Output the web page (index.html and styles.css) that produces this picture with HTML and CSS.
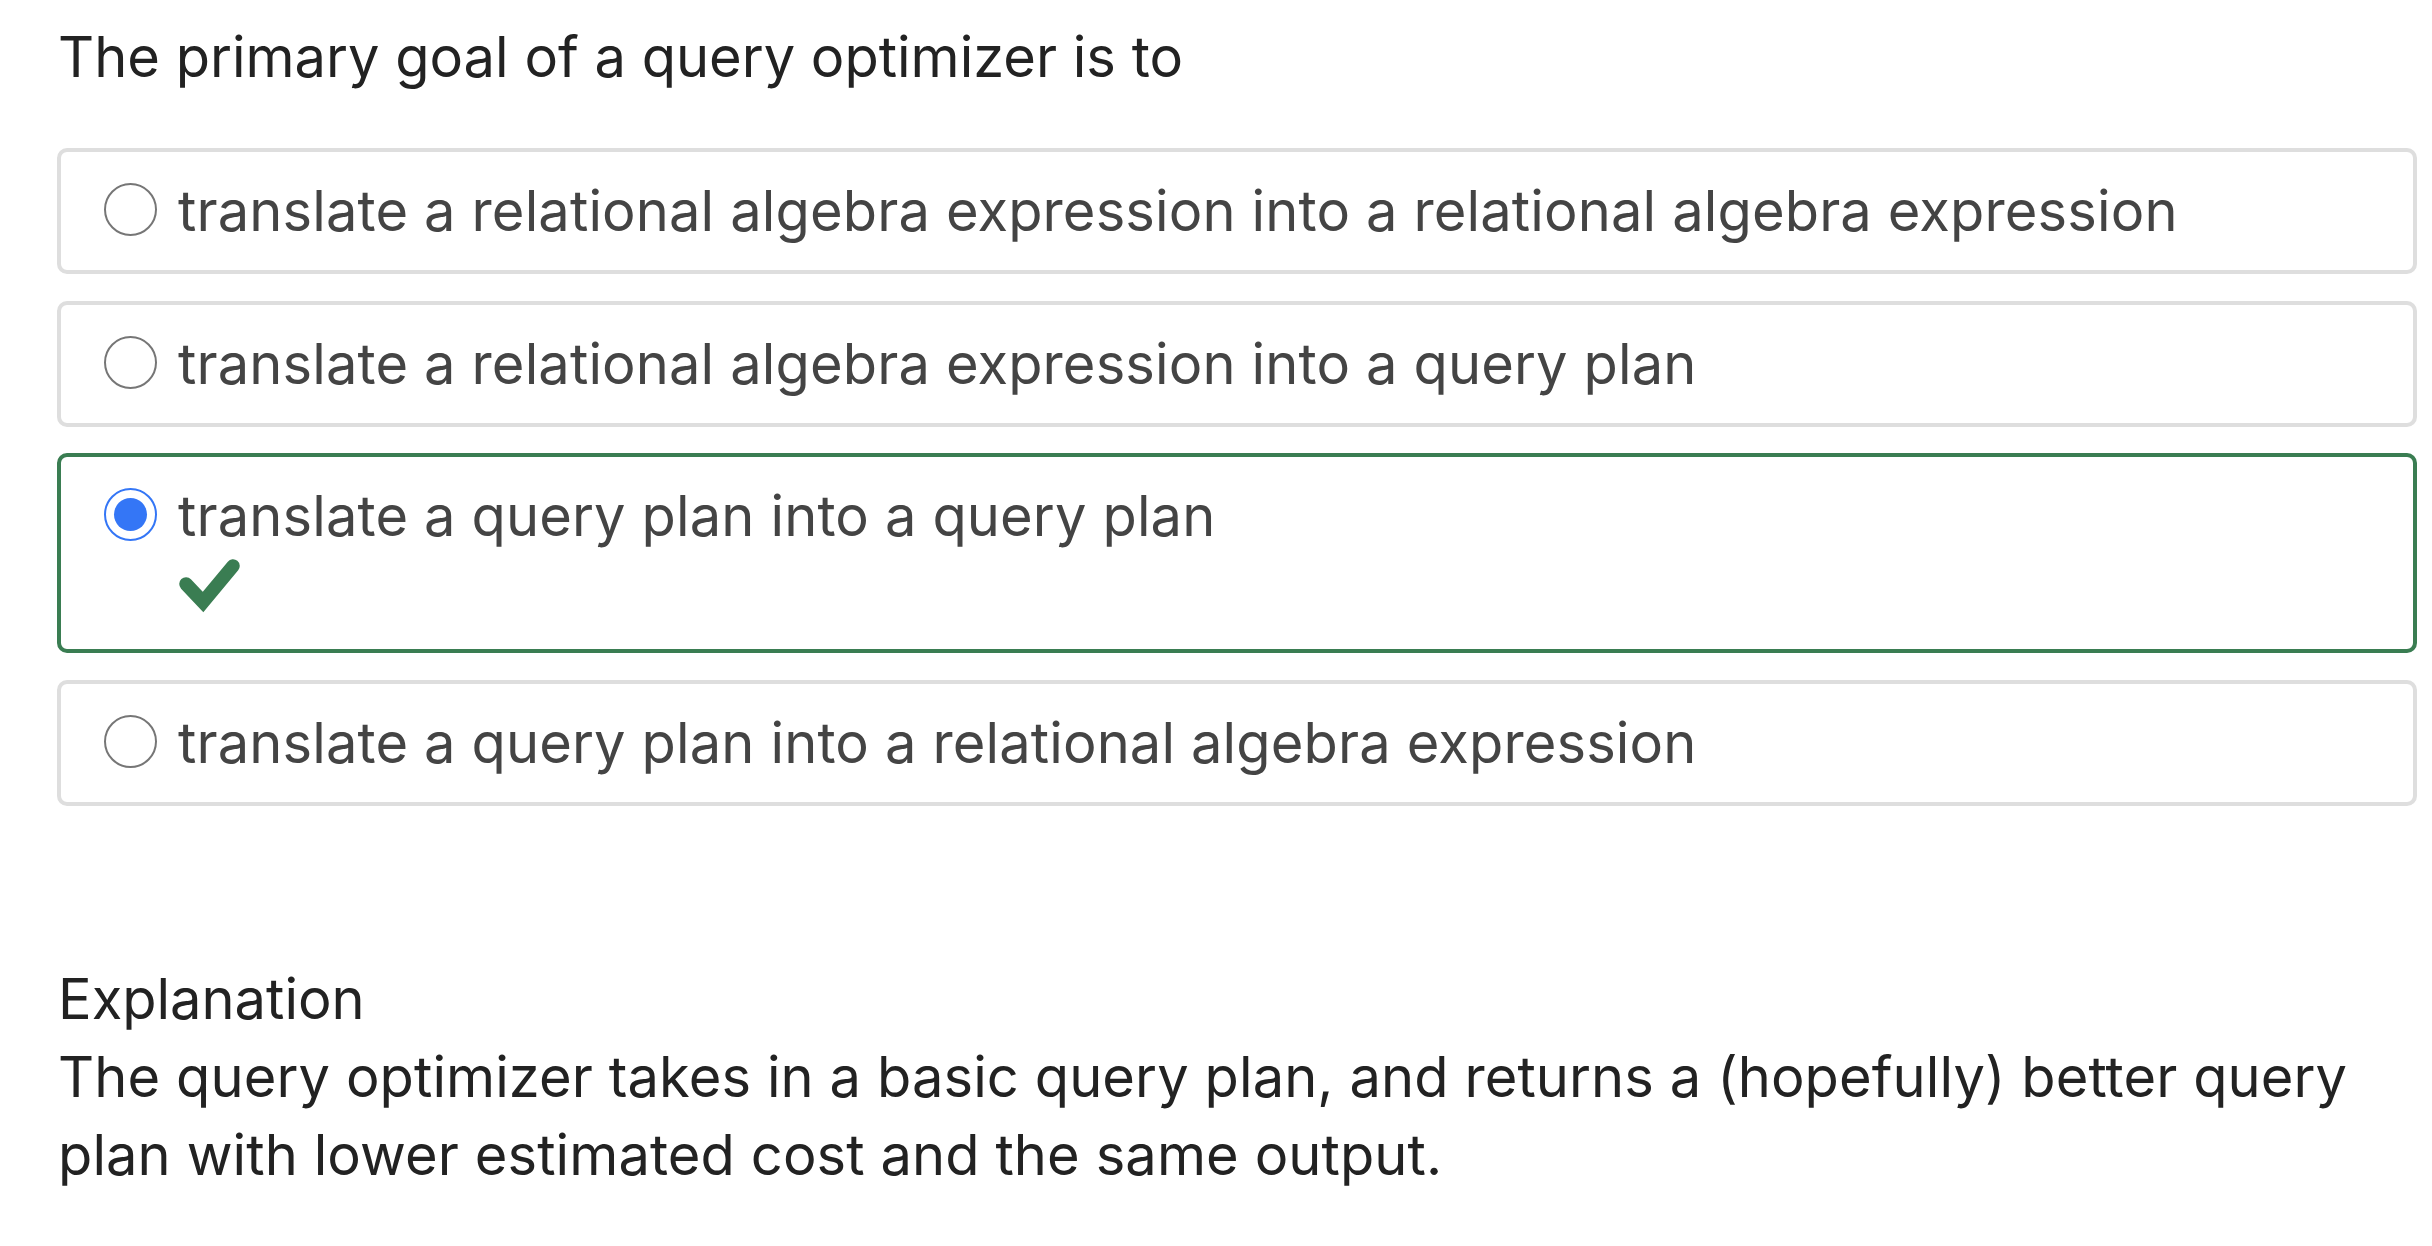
FILE: index.html
```html
<!DOCTYPE html>
<html lang="en">
<head>
<meta charset="utf-8">
<title>Quiz question</title>
<link rel="stylesheet" href="styles.css">
</head>
<body>
<main class="quiz">
  <p class="question">The primary goal of a query optimizer is to</p>
  <div class="options">
    <label class="option">
      <span class="radio"></span>
      <span class="option-body"><span class="option-text">translate a relational algebra expression into a relational algebra expression</span></span>
    </label>
    <label class="option">
      <span class="radio"></span>
      <span class="option-body"><span class="option-text">translate a relational algebra expression into a query plan</span></span>
    </label>
    <label class="option option-correct">
      <span class="radio radio-checked"><span class="radio-dot"></span></span>
      <span class="option-body">
        <span class="option-text">translate a query plan into a query plan</span>
        <span class="check">
          <svg width="68" height="56" viewBox="0 0 68 56" aria-hidden="true">
            <polyline points="11,27 28,45 58,9" fill="none" stroke="#3a7d52" stroke-width="13.5" stroke-linejoin="miter" stroke-linecap="round"/>
          </svg>
        </span>
      </span>
    </label>
    <label class="option">
      <span class="radio"></span>
      <span class="option-body"><span class="option-text">translate a query plan into a relational algebra expression</span></span>
    </label>
  </div>
  <section class="explanation">
    <p class="explanation-title">Explanation</p>
    <p class="explanation-text">The query optimizer takes in a basic query plan, and returns a (hopefully) better query plan with lower estimated cost and the same output.</p>
  </section>
</main>
</body>
</html>
```
FILE: styles.css
```css
html, body {
  margin: 0;
  padding: 0;
  background: #ffffff;
}

body {
  font-family: "Inter", "Noto Sans", sans-serif;
  font-size: 56px;
  line-height: 78px;
  color: #222222;
}

.quiz {
  width: 2360px;
  padding: 18px 0 0 57px;
}

p {
  margin: 0;
}

.question {
  padding-left: 1px;
  color: #222222;
}

.options {
  display: flex;
  flex-direction: column;
  gap: 26.5px;
  margin-top: 52px;
}

.option {
  display: flex;
  align-items: flex-start;
  border: 4px solid #dedede;
  border-radius: 10px;
  padding: 20px 20px 20px 43px;
  color: #444444;
}

.option-correct {
  border-color: #3a7d52;
}

.option-text {
  letter-spacing: 0.14px;
}

.radio {
  flex: none;
  box-sizing: border-box;
  width: 53px;
  height: 53px;
  border: 2.5px solid #767676;
  border-radius: 50%;
  margin-top: 11px;
  margin-right: 21px;
  display: flex;
  align-items: center;
  justify-content: center;
}

.radio-checked {
  border-color: #3476f6;
}

.radio-dot {
  width: 33px;
  height: 33px;
  border-radius: 50%;
  background: #3476f6;
}

.option-body {
  display: flex;
  flex-direction: column;
}

.check {
  display: block;
  box-sizing: border-box;
  height: 74px;
  margin-left: -3px;
  padding-top: 2px;
}

.check svg {
  display: block;
}

.explanation {
  margin-top: 154px;
  padding-left: 1px;
  color: #222222;
}

.explanation-text {
  letter-spacing: 0.1px;
}
```
